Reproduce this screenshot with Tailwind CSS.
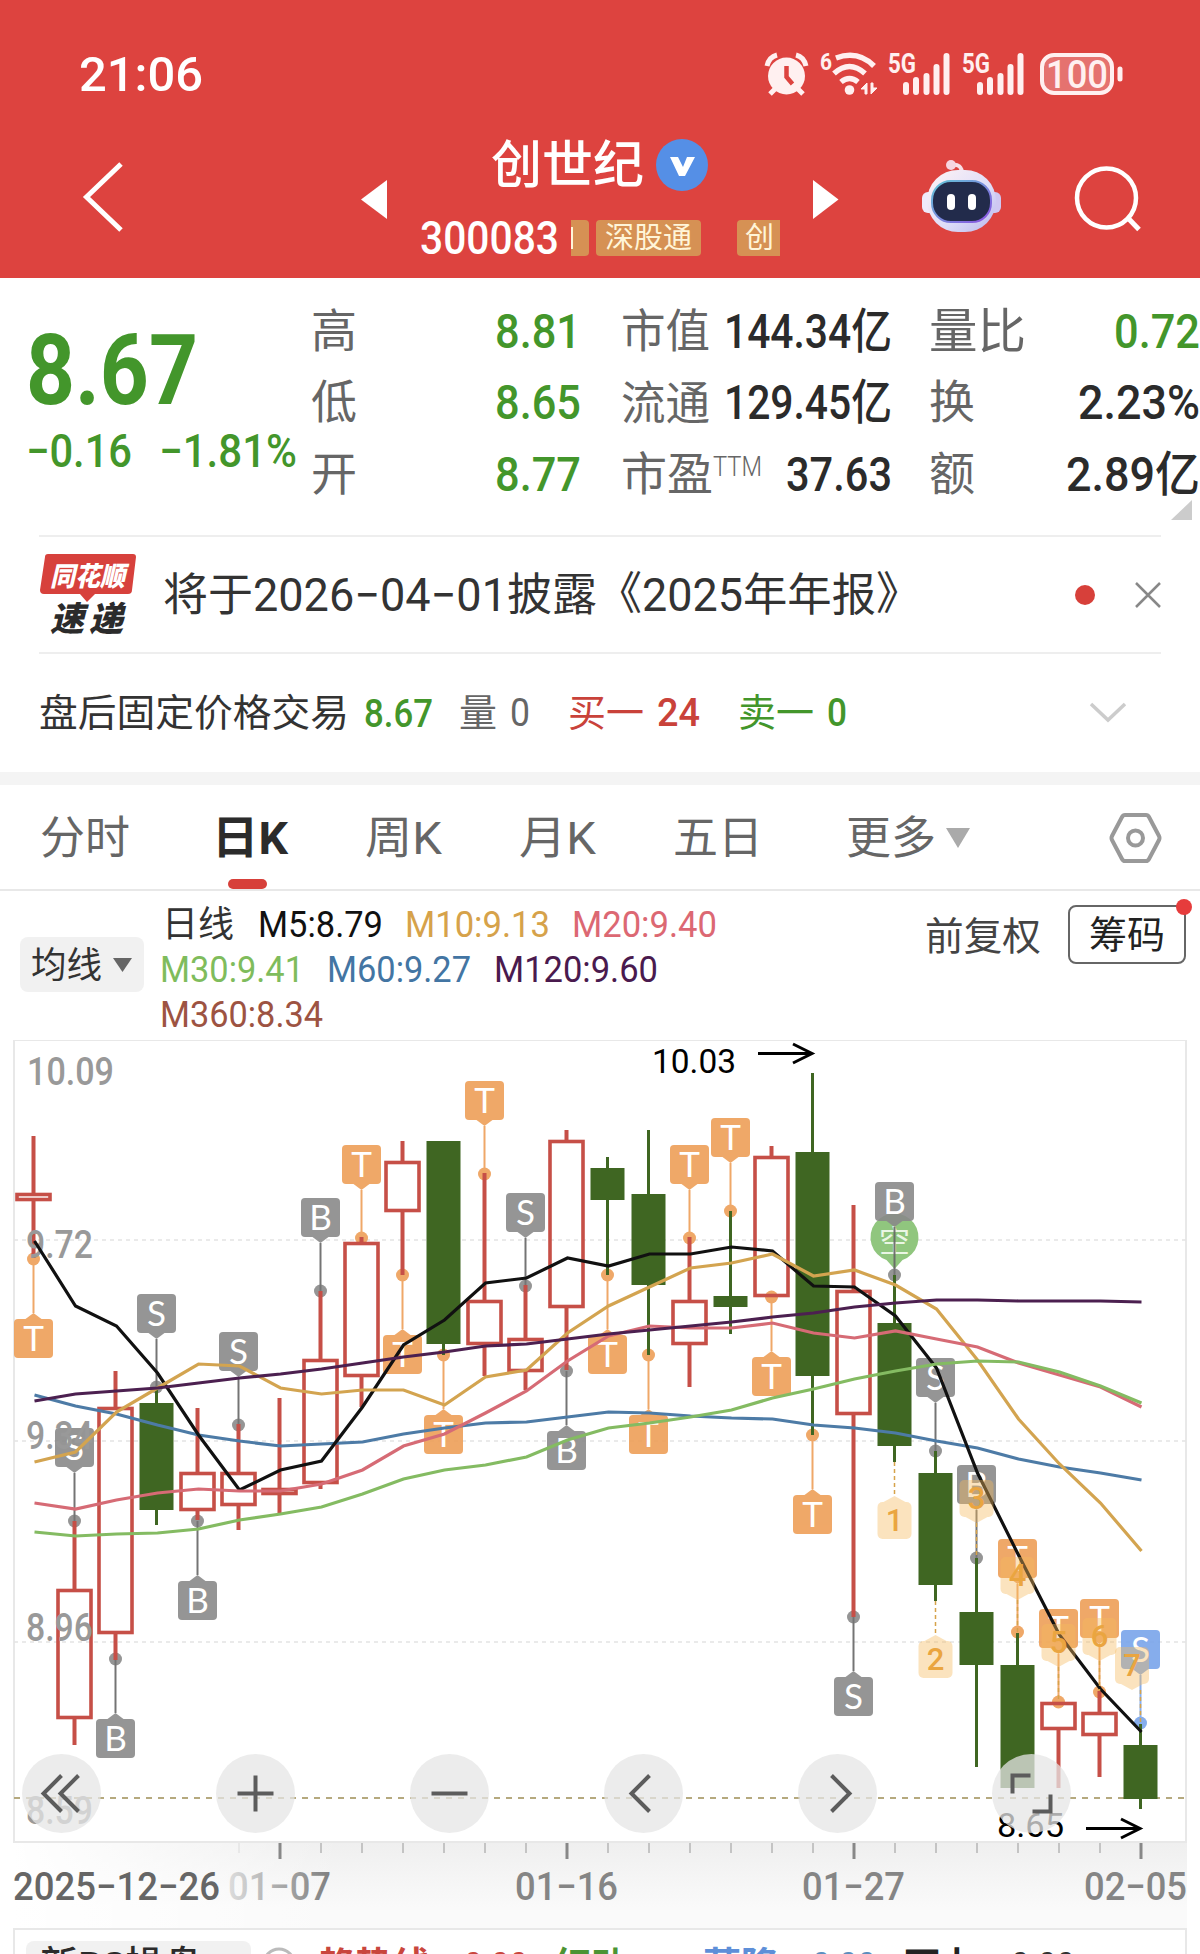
<!DOCTYPE html>
<html lang="zh-CN">
<head>
    <meta charset="UTF-8">
    <meta name="viewport" content="width=device-width, initial-scale=1.0">
    <title>创世纪 300083</title>
    <script src="https://cdn.jsdelivr.net/npm/@tailwindcss/browser@4"></script>
</head>
<body class="w-[1200px] h-[1954px] overflow-hidden bg-white leading-none text-[#333] whitespace-nowrap font-['Roboto','Noto_Sans_CJK_SC',sans-serif]">

    <!-- Header -->
    <header class="h-[278px] bg-[#dd433f] text-white">
        <div class="h-[112px] pt-9 pl-[79px] pr-[75px] flex items-center justify-between">
            <span data-fit="124" class="text-[48px] font-medium">21:06</span>
            <svg class="w-[361px] h-[50px] shrink-0" viewBox="764 48 361 50" fill="#fff0f0">
                <circle cx="786.5" cy="75" r="18.5"/>
                <path d="M767 65q2-9 10-11M806 65q-2-9-10-11M776 87l-6 6M797 87l6 6" stroke="#fff0f0" stroke-width="5" fill="none"/>
                <path d="M786.5 65v11l6 7" stroke="#dd433f" stroke-width="4.5" fill="none"/>
                <text x="820" y="69" font-size="24" font-weight="700" textLength="12" lengthAdjust="spacingAndGlyphs">6</text>
                <circle cx="849.5" cy="89" r="4.8"/>
                <path d="M841 81q8.500-7 17 0M834 72.500q15.500-14 31 0M836 57q22-8 38 8" stroke="#fff0f0" stroke-width="5.500" fill="none"/>
                <path d="M867 93v-11l-6 6h4v5zM871 82v11l6-6h-4v-5z" stroke="#fff0f0" stroke-width="1"/>
                <text x="888" y="72" font-size="27" font-weight="700" textLength="28" lengthAdjust="spacingAndGlyphs">5G</text>
                <path d="M906 84v7M916 79v12M926.500 75v16M936.500 66v25M946.500 55v36" stroke="#fff0f0" stroke-width="6" stroke-linecap="round"/>
                <text x="962" y="72" font-size="27" font-weight="700" textLength="28" lengthAdjust="spacingAndGlyphs">5G</text>
                <path d="M980 84v7M990 79v12M1000.500 75v16M1010.500 66v25M1020.500 55v36" stroke="#fff0f0" stroke-width="6" stroke-linecap="round"/>
                <rect x="1042" y="54" width="70" height="38" rx="12" fill="#fff" fill-opacity=".25" stroke="#fff0f0" stroke-width="4"/>
                <text x="1046" y="86.500" font-size="38" font-weight="500" textLength="62" lengthAdjust="spacingAndGlyphs">100</text>
                <path d="M1120 68v10" stroke="#fff0f0" stroke-width="5" stroke-linecap="round"/>
            </svg>
        </div>

        <div class="flex">
            <svg class="w-[420px] h-[150px]" viewBox="0 112 420 150">
                <path d="M121 164L86.500 197L121 230" stroke="#fff" stroke-width="5" fill="none"/>
                <path d="M387 180v39L361 199.500z" fill="#fff"/>
            </svg>
            <div class="w-[380px] pt-[27px]">
                <div class="flex items-center h-[52px] pl-[71px]">
                    <span class="text-[51px] font-medium">创世纪</span>
                    <svg class="w-[52px] h-[52px] ml-3" viewBox="0 0 52 52">
                        <circle cx="26" cy="26" r="26" fill="#558fe6"/>
                        <path d="M14 18h8l5 10 4-10h8L29 37h-6z" fill="#fff"/>
                    </svg>
                </div>
                <div class="flex items-center h-9 mt-[29px]">
                    <span data-fit="139" class="text-[46px] font-medium">300083</span>
                    <span class="w-[18px] h-9 ml-3 rounded-r bg-[#d69154] flex items-center"><i class="w-[2px] h-[22px] bg-[#fff5d8]"></i></span>
                    <span class="w-[105px] h-9 ml-[7px] rounded bg-[#d69154] text-[#fff5d8] text-[29px] flex items-center justify-center">深股通</span>
                    <span class="w-[43px] h-9 ml-9 rounded-l bg-[#d69154] text-[#fff5d8] text-[29px] flex items-center pl-2">创</span>
                </div>
            </div>
            <svg class="w-[400px] h-[150px]" viewBox="800 112 400 150">
                <defs>
                    <linearGradient id="shell" x1="0" y1="0" x2="1" y2="1">
                        <stop offset="0" stop-color="#fff4f5"/><stop offset=".6" stop-color="#dddcf8"/><stop offset="1" stop-color="#b9b6ec"/>
                    </linearGradient>
                    <linearGradient id="rim" x1="0" y1="0" x2="1" y2="1">
                        <stop offset="0" stop-color="#64c8d8"/><stop offset="1" stop-color="#8a4fe0"/>
                    </linearGradient>
                </defs>
                <path d="M813 180v39l25.500-19.500z" fill="#fff"/>
                <path d="M951 165q11-2 11 9" stroke="#f9dfe6" stroke-width="4" fill="none"/>
                <circle cx="951" cy="165" r="5" fill="#f6d5e0"/>
                <rect x="922" y="192" width="16" height="21" rx="6" fill="#efeafb"/>
                <rect x="985" y="192" width="16" height="21" rx="6" fill="#cfc8f2"/>
                <rect x="927" y="170" width="69" height="62" rx="31" fill="url(#shell)"/>
                <rect x="932" y="181" width="59" height="41" rx="19" fill="#222b4b" stroke="url(#rim)" stroke-width="2"/>
                <rect x="947" y="194" width="8" height="16" rx="4" fill="#fff"/>
                <rect x="968" y="194" width="8" height="16" rx="4" fill="#fff"/>
                <circle cx="1106.500" cy="198" r="29.500" stroke="#fff" stroke-width="4.500" fill="none"/>
                <path d="M1127 217l12 12.500" stroke="#fff" stroke-width="5"/>
            </svg>
        </div>
    </header>

    <!-- Quote -->
    <section class="relative h-[257px] flex text-[46px] text-[#666]">
        <div class="w-[311px] pl-[26px] pt-[42px] text-[#43962b] shrink-0">
            <div class="h-[98px] flex items-center"><span data-fit="172" class="text-[98px] font-bold">8.67</span></div>
            <div class="h-[66px] flex items-center gap-[27px] font-medium">
                <span data-fit="106">−0.16</span>
                <span data-fit="138">−1.81%</span>
            </div>
        </div>
        <div class="w-[270px] pt-[17px] shrink-0">
            <div class="h-[71.5px] flex items-center justify-between">高<span data-fit="86" class="text-[48px] font-medium text-[#43962b]">8.81</span></div>
            <div class="h-[71.5px] flex items-center justify-between">低<span data-fit="86" class="text-[48px] font-medium text-[#43962b]">8.65</span></div>
            <div class="h-[71.5px] flex items-center justify-between">开<span data-fit="86" class="text-[48px] font-medium text-[#43962b]">8.77</span></div>
        </div>
        <div class="w-[271px] ml-[40px] pt-[17px] shrink-0">
            <div class="h-[71.5px] flex items-center justify-between"><span data-fit="89">市值</span><span data-fit="168" class="text-[48px] font-medium text-[#2b2b2b]">144.34亿</span></div>
            <div class="h-[71.5px] flex items-center justify-between"><span data-fit="89">流通</span><span data-fit="168" class="text-[48px] font-medium text-[#2b2b2b]">129.45亿</span></div>
            <div class="h-[71.5px] flex items-center"><span>市盈</span><span data-fit="49" class="text-[28px] mb-4 font-light">TTM</span><span data-fit="106" class="ml-auto text-[48px] font-medium text-[#2b2b2b]">37.63</span></div>
        </div>
        <div class="w-[271px] ml-[37px] pt-[17px] shrink-0">
            <div class="h-[71.5px] flex items-center justify-between"><span data-fit="97" class="text-[48px]">量比</span><span data-fit="86" class="text-[48px] font-medium text-[#43962b]">0.72</span></div>
            <div class="h-[71.5px] flex items-center justify-between">换<span data-fit="122" class="text-[48px] font-medium text-[#2b2b2b]">2.23%</span></div>
            <div class="h-[71.5px] flex items-center justify-between">额<span data-fit="134" class="text-[48px] font-medium text-[#2b2b2b]">2.89亿</span></div>
        </div>
        <svg class="absolute left-[1171px] top-[222px] w-[21px] h-5" viewBox="0 0 21 20"><path d="M21 0v20H0z" fill="#ccc"/></svg>
    </section>

    <!-- News -->
    <section class="mx-[39px] h-[119px] border-y-2 border-[#eee] flex items-center">
        <svg class="w-[98px] h-[90px]" viewBox="39 550 98 90" font-weight="900" font-style="italic">
            <path d="M48 554h85q3 0 3 3l-4 33q0 4-4 4H95l-8 8-7-8H44q-4 0-4-4l5-33q0-3 3-3z" fill="#d7413c"/>
            <text x="50" y="586" font-size="27" fill="#fff" textLength="75" lengthAdjust="spacingAndGlyphs">同花顺</text>
            <text x="50" y="631" font-size="34" fill="#2b2b2b" textLength="73">速递</text>
        </svg>
        <div class="flex items-center ml-[26px] text-[45px]">
            <span data-fit="90">将于</span><span data-fit="254" class="text-[46px]">2026−04−01</span><span data-fit="90">披露</span><span>《</span><span data-fit="101" class="text-[46px]">2025</span><span data-fit="133">年年报</span><span>》</span>
        </div>
        <svg class="w-[90px] h-10 ml-auto" viewBox="1071 574 90 40">
            <circle cx="1085" cy="594" r="10" fill="#d7403a"/>
            <path d="M1136 582l24 24M1160 582l-24 24" stroke="#888" stroke-width="2.500"/>
        </svg>
    </section>

    <!-- After-hours trading -->
    <section class="h-[118px] pl-[39px] pr-[73px] flex items-center text-[38px]">
        <span data-fit="310">盘后固定价格交易</span>
        <span data-fit="69" class="ml-[15px] text-[39px] font-medium text-[#43962b]">8.67</span>
        <span class="ml-[26px] text-[#666]">量</span>
        <span data-fit="20" class="ml-[13px] text-[#666]">0</span>
        <span class="ml-[38px] text-[#c9423a]">买一</span>
        <span data-fit="43" class="ml-[13px] font-medium text-[#c9423a]">24</span>
        <span class="ml-[38px] text-[#43962b]">卖一</span>
        <span data-fit="20" class="ml-[13px] font-medium text-[#43962b]">0</span>
        <svg class="ml-auto w-[38px] h-6" viewBox="0 0 38 24"><path d="M2 3l17 16L36 3" stroke="#ccc" stroke-width="3.500" fill="none"/></svg>
    </section>
    <div class="h-[13px] bg-[#f4f4f4]"></div>

    <!-- Period tabs -->
    <nav class="relative h-[106px] pl-10 pr-[38px] pt-[2px] border-b-2 border-[#e8e8e8] flex items-center text-[45px] text-[#666]">
        <span>分时</span>
        <span data-fit="76" class="ml-[82px] font-bold text-[#2b2b2b]">日K</span>
        <span data-fit="77" class="ml-[77px]">周K</span>
        <span data-fit="77" class="ml-[77px]">月K</span>
        <span class="ml-[77px]">五日</span>
        <span class="ml-[83px]">更多</span>
        <svg class="ml-[10px] w-[24px] h-5" viewBox="0 0 24 20"><path d="M0 0h24L12 20z" fill="#aaa"/></svg>
        <svg class="ml-auto w-[53px] h-[52px]" viewBox="0 0 53 52" fill="none" stroke="#999" stroke-width="4">
            <path d="M16 3h21q2 0 3 2l10 19q1 2 0 4L40 47q-1 2-3 2H16q-2 0-3-2L3 28q-1-2 0-4L13 5q1-2 3-2z"/>
            <circle cx="26.500" cy="26" r="7.500"/>
        </svg>
        <i class="absolute left-[228px] bottom-0 w-[39px] h-[10px] rounded-[5px] bg-[#d7403a]"></i>
    </nav>

    <!-- Moving average legend -->
    <section class="h-[149px] pl-5 pr-[14px] flex text-[36px]">
        <div class="mt-[46px] w-[124px] h-[55px] rounded-lg bg-[#f1f1f1] flex items-center pl-[11px]">
            <span data-fit="71">均线</span>
            <svg class="ml-[11px] w-[19px] h-[14px]" viewBox="0 0 19 14"><path d="M0 0h19L9.500 14z" fill="#666"/></svg>
        </div>
        <div class="ml-4 pt-[10px]">
            <div class="h-[45px] flex items-center">
                <span data-fit="72" class="ml-[2px]">日线</span>
                <span data-fit="125" class="ml-[24px] text-[#111]">M5:8.79</span>
                <span data-fit="145" class="ml-[22px] text-[#d6a24a]">M10:9.13</span>
                <span data-fit="145" class="ml-[22px] text-[#dc6873]">M20:9.40</span>
            </div>
            <div class="h-[45px] flex items-center">
                <span data-fit="144" class="text-[#7fbc5c]">M30:9.41</span>
                <span data-fit="144" class="ml-[23px] text-[#4375a3]">M60:9.27</span>
                <span data-fit="164" class="ml-[23px] text-[#4a1a4e]">M120:9.60</span>
            </div>
            <div class="h-[45px] flex items-center">
                <span data-fit="163" class="text-[#9d5342]">M360:8.34</span>
            </div>
        </div>
        <span data-fit="116" class="ml-auto mt-[22px] text-[38.5px] text-[#444]">前复权</span>
        <div class="relative ml-[27px] mt-[14px] w-[118px] h-[59px] border-2 border-[#666] rounded-lg flex items-center justify-center text-[38px] text-[#222]">
            筹码
            <i class="absolute -right-2 -top-2 w-4 h-4 rounded-full bg-[#e63c3c]"></i>
        </div>
    </section>

    <!-- K-line chart, date axis and the top of the indicator panel -->
    <svg id="chart" class="block w-[1200px] h-[914px]" viewBox="0 1040 1200 914">
        <defs>
            <linearGradient id="axisV" x1="0" y1="0" x2="0" y2="1"><stop offset="0" stop-color="#efefef"/><stop offset=".7" stop-color="#fafafa"/></linearGradient>
            <linearGradient id="axisH"><stop offset="0" stop-color="#fff"/><stop offset="1" stop-color="#fff" stop-opacity="0"/></linearGradient>
            <linearGradient id="dateFade"><stop offset="0" stop-color="#ddd"/><stop offset=".5" stop-color="#aaa"/><stop offset="1" stop-color="#808080"/></linearGradient>
        </defs>
    </svg>

    <script>
        const chart = document.getElementById('chart');
        const X = i => 33.5 + 41 * i;
        const parts = [];

        function text(x, y, w, size, fill, str, extra = '') {
            parts.push(`<text x="${x}" y="${y}" font-size="${size}" fill="${fill}" textLength="${w}" lengthAdjust="spacingAndGlyphs" ${extra}>${str}</text>`);
        }

        // Frame and grid
        parts.push('<rect x="14" y="1842" width="1173" height="94" fill="url(#axisV)"/><rect x="13" y="1842" width="330" height="94" fill="url(#axisH)"/>');
        parts.push('<rect x="14" y="1040" width="1172" height="802" fill="#fff" stroke="#e8e8e8" stroke-width="2"/>');
        [1240, 1441, 1642].forEach(y => {
            parts.push(`<path d="M14 ${y}H1186" stroke="#e4e4e4" stroke-width="1.500" stroke-dasharray="4 4"/>`);
        });
        parts.push('<path d="M14 1798H1186" stroke="#b5a97e" stroke-width="2" stroke-dasharray="6 6"/>');

        // Short-signal balloon
        parts.push('<path d="M894.500 1269l-8-9a24 24 0 1 1 16 0z" fill="#90c67e"/>');
        text(879, 1252, 31, 31, '#eaf6e4', '空');

        // Markers: index, dot y, direction (-1 above, 1 below), letter, colour
        const gray = '#8a8a8a', orange = '#ee9f58', blue = '#79a5ea';
        const markers = [
            [0, 1259, 1, 'T', orange], [1, 1521, -1, 'S', gray], [2, 1659, 1, 'B', gray], [3, 1387, -1, 'S', gray],
            [4, 1521, 1, 'B', gray], [5, 1425, -1, 'S', gray], [7, 1291, -1, 'B', gray], [8, 1238, -1, 'T', orange],
            [9, 1275, 1, 'T', orange], [10, 1355, 1, 'T', orange], [11, 1174, -1, 'T', orange], [12, 1286, -1, 'S', gray],
            [13, 1371, 1, 'B', gray], [14, 1275, 1, 'T', orange], [15, 1355, 1, 'T', orange], [16, 1238, -1, 'T', orange],
            [17, 1211, -1, 'T', orange], [18, 1297, 1, 'T', orange], [19, 1435, 1, 'T', orange], [20, 1617, 1, 'S', gray],
            [21, 1275, -1, 'B', gray], [22, 1451, -1, 'S', gray], [23, 1558, -1, 'B', gray], [24, 1632, -1, 'T', orange],
            [25, 1702, -1, 'T', orange], [26, 1692, -1, 'T', orange], [27, 1723, -1, 'S', blue]
        ];
        markers.forEach(([i, dot, dir, letter, color]) => {
            const x = X(i);
            const top = dir < 0 ? dot - 93 : dot + 60;
            const edge = dir < 0 ? top + 39 : top;
            const tip = edge - dir * 6;
            parts.push(`<g opacity=".9"><circle cx="${x}" cy="${dot}" r="6.500" fill="${color}"/>
                <path d="M${x} ${dot}V${tip}" stroke="${color === gray ? '#666' : color}" stroke-width="2"/>
                <path d="M${x - 8} ${edge}L${x} ${tip}L${x + 8} ${edge}z" fill="${color}"/>
                <rect x="${x - 19.5}" y="${top}" width="39" height="39" rx="4" fill="${color}"/></g>`);
            parts.push(`<text x="${x}" y="${top + 31.500}" font-family="Lato, sans-serif" font-size="35" fill="#fff" text-anchor="middle">${letter}</text>`);
        });

        // Candles: type, high, body top, body bottom, low
        const candles = [
            ['r', 1136, 1193, 1201, 1258], ['r', 1521, 1589, 1719, 1745], ['r', 1371, 1407, 1634, 1660], ['g', 1390, 1403, 1510, 1525],
            ['r', 1408, 1472, 1511, 1520], ['r', 1424, 1472, 1506, 1530], ['r', 1398, 1488, 1495, 1513], ['r', 1291, 1359, 1484, 1489],
            ['r', 1237, 1242, 1377, 1407], ['r', 1141, 1161, 1212, 1275], ['g', 1141, 1141, 1344, 1355], ['r', 1173, 1300, 1345, 1376],
            ['r', 1285, 1338, 1372, 1390], ['r', 1130, 1140, 1308, 1370], ['g', 1157, 1168, 1200, 1275], ['g', 1130, 1194, 1285, 1355],
            ['r', 1237, 1300, 1345, 1387], ['g', 1211, 1296, 1307, 1334], ['r', 1146, 1156, 1297, 1297], ['g', 1073, 1152, 1376, 1435],
            ['r', 1205, 1290, 1415, 1617], ['g', 1275, 1323, 1446, 1462], ['g', 1451, 1473, 1585, 1601], ['g', 1558, 1612, 1665, 1767],
            ['g', 1633, 1665, 1788, 1788], ['r', 1702, 1702, 1730, 1788], ['r', 1691, 1712, 1736, 1777], ['g', 1724, 1745, 1799, 1809]
        ];
        candles.forEach(([type, high, top, bottom, low], i) => {
            const x = X(i);
            if (type === 'r') {
                parts.push(`<path d="M${x} ${high}V${top}M${x} ${bottom}V${low}" stroke="#c64f47" stroke-width="4"/>
                    <rect x="${x - 16.500}" y="${top + 1.5}" width="33" height="${bottom - top - 3}" fill="none" stroke="#c64f47" stroke-width="3.600"/>`);
            } else {
                parts.push(`<path d="M${x} ${high}V${low}" stroke="#3f6622" stroke-width="3"/>
                    <rect x="${x - 17}" y="${top}" width="34" height="${bottom - top}" fill="#3f6622"/>`);
            }
        });

        // Price scale
        text(27, 1085, 87, 38, '#999', '10.09', 'font-weight="500"');
        [[1258, '9.72'], [1449, '9.34'], [1641, '8.96'], [1824, '8.59']].forEach(([y, label]) => {
            text(26, y, 67, 38, '#999', label, 'font-weight="500"');
        });

        // Moving averages
        const averages = {
            '#4d7ba6': [1395, 1406, 1414, 1425, 1435, 1441, 1446, 1444, 1442, 1434, 1428, 1423, 1422, 1417, 1412, 1413, 1416, 1418, 1419, 1425, 1428, 1433, 1441, 1448, 1459, 1467, 1473, 1480],
            '#111111': [1241, 1306, 1326, 1373, 1435, 1490, 1470, 1461, 1407, 1345, 1320, 1283, 1278, 1258, 1266, 1254, 1254, 1247, 1251, 1286, 1287, 1316, 1368, 1473, 1555, 1635, 1689, 1732],
            '#d3a450': [1462, 1452, 1412, 1388, 1364, 1366, 1388, 1394, 1390, 1390, 1405, 1377, 1370, 1333, 1306, 1287, 1268, 1263, 1254, 1276, 1270, 1285, 1309, 1360, 1419, 1464, 1503, 1551],
            '#d66b75': [1503, 1509, 1500, 1493, 1489, 1491, 1491, 1484, 1470, 1446, 1434, 1413, 1391, 1361, 1336, 1326, 1328, 1328, 1323, 1333, 1338, 1331, 1339, 1347, 1363, 1375, 1387, 1407],
            '#84bb62': [1532, 1536, 1534, 1533, 1529, 1520, 1514, 1507, 1494, 1479, 1470, 1465, 1457, 1440, 1428, 1423, 1417, 1410, 1398, 1389, 1379, 1371, 1364, 1361, 1362, 1372, 1386, 1403],
            '#4c2050': [1401, 1394, 1391, 1388, 1383, 1378, 1374, 1369, 1363, 1357, 1352, 1346, 1344, 1339, 1334, 1330, 1326, 1322, 1317, 1313, 1307, 1303, 1300, 1300, 1301, 1301, 1301, 1302]
        };
        Object.entries(averages).forEach(([color, values]) => {
            parts.push(`<polyline points="${values.map((y, i) => `${X(i) + 1},${y}`).join(' ')}" fill="none" stroke="${color}" stroke-width="3.200"/>`);
        });

        // Sequence numbers: x, box top, digit, direction, dashed line start and end
        const numbers = [
            [894.5, 1502, 1, 1, 1462, 1495], [935.5, 1641, 2, 1, 1601, 1634], [976.5, 1480, 3, -1, 1523, 1558], [1017.5, 1557, 4, -1, 1600, 1632],
            [1058.5, 1624, 5, -1, 1667, 1702], [1099.5, 1618, 6, -1, 1661, 1691], [1132, 1647, 7, -1, 1690, 1723]
        ];
        numbers.forEach(([x, top, digit, dir, from, to]) => {
            const edge = dir > 0 ? top : top + 37;
            const lineX = digit === 7 ? 1140.5 : x;
            parts.push(`<path d="M${lineX} ${from}V${to}" stroke="#d6a24a" stroke-width="1.500" stroke-dasharray="4 3"/>
                <path d="M${x - 11} ${edge}L${x} ${edge - dir * 6}L${x + 11} ${edge}z" fill="#f4b85c" fill-opacity=".4"/>
                <rect x="${x - 17}" y="${top}" width="34" height="37" rx="5" fill="#f4b85c" fill-opacity=".4"/>
                <text x="${x}" y="${top + 29}" font-size="31" font-weight="500" fill="#eaa540" text-anchor="middle">${digit}</text>`);
        });

        // High and low callouts
        text(652, 1073, 84, 34, '#000', '10.03');
        parts.push('<path d="M758 1053.500h53M793 1044l19 9.500-19 9.500" stroke="#000" stroke-width="3" fill="none"/>');
        text(997, 1837, 67, 34, '#000', '8.65');
        parts.push('<path d="M1086 1828.500h53M1121 1819l19 9.500-19 9.500" stroke="#000" stroke-width="3" fill="none"/>');

        // Chart controls
        const controls = [
            [61.5, 'M0-18l-18 18 18 18M17-18l-18 18 18 18'],
            [255.5, 'M-18 0h36M0-18v36'],
            [449.5, 'M-18 0h36'],
            [643.5, 'M6-18l-18 18 18 18'],
            [837.5, 'M-6-18l18 18-18 18'],
            [1031.5, 'M-19 0v-18h18M1 18h18v-17']
        ];
        controls.forEach(([x, d]) => {
            parts.push(`<g transform="translate(${x} 1793.500)"><circle r="39.500" fill="#e6e6e6" fill-opacity=".75"/><path d="${d}" fill="none" stroke="#5c5c5c" stroke-width="4"/></g>`);
        });

        // Date axis
        for (let i = 5; i < 28; i++) {
            const major = (i - 6) % 7 === 0;
            const x = X(i) + 0.5;
            parts.push(`<path d="M${x} 1843v${major ? 16 : 10}" stroke="${major ? '#888' : i === 5 ? '#e8e8e8' : '#c4c4c4'}" stroke-width="${major ? 3 : 2}"/>`);
        }
        text(13, 1900, 207, 39, '#666', '2025−12−26', 'font-weight="500"');
        text(228, 1900, 103, 39, 'url(#dateFade)', '01−07', 'font-weight="500"');
        text(515, 1900, 103, 39, '#858585', '01−16', 'font-weight="500"');
        text(802, 1900, 103, 39, '#858585', '01−27', 'font-weight="500"');
        text(1084, 1900, 103, 39, '#858585', '02−05', 'font-weight="500"');

        // Indicator panel
        parts.push('<rect x="14" y="1929" width="1172" height="60" fill="#fff" stroke="#e8e8e8" stroke-width="2"/><rect x="26" y="1941" width="225" height="50" rx="8" fill="#f1f1f1"/>');
        text(40, 1978, 162, 37, '#2b2b2b', '新BS操盘', 'font-weight="500"');
        parts.push('<circle cx="279" cy="1964" r="15" fill="none" stroke="#bbb" stroke-width="3"/>');
        const bold = 'font-weight="700"';
        text(318, 1979, 112, 37, '#c9463d', '趋势线', bold);
        text(464, 1978, 64, 37, '#c9463d', '0.00');
        text(555, 1979, 72, 37, '#4b9434', '红动', bold);
        text(703, 1979, 76, 37, '#5e8fd8', '蓝降', bold);
        text(812, 1978, 64, 37, '#5c8fbf', '0.00');
        text(904, 1979, 72, 37, '#222', '下上', bold);
        text(1011, 1978, 64, 37, '#333', '0.00');

        chart.insertAdjacentHTML('beforeend', parts.join(''));

        // Labels with a fixed advance width
        document.querySelectorAll('[data-fit]').forEach(el => {
            const w = el.dataset.fit;
            el.classList.add('shrink-0');
            el.innerHTML = `<svg class="block overflow-visible h-[1.2em]" style="width:${w}px">
                <text x="0" y="0.960em" fill="currentColor" textLength="${w}" lengthAdjust="spacingAndGlyphs">${el.textContent}</text></svg>`;
        });
    </script>
</body>
</html>
